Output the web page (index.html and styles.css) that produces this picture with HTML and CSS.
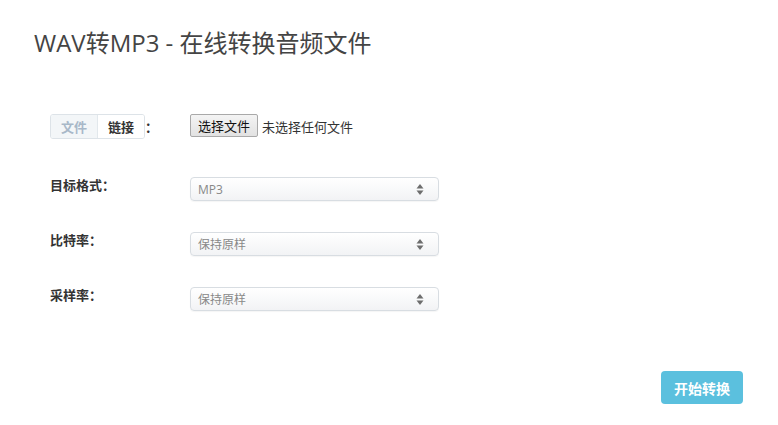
FILE: index.html
```html
<!DOCTYPE html>
<html lang="zh-CN">
<head>
<meta charset="utf-8">
<title>WAV转MP3</title>
<link rel="stylesheet" href="styles.css">
</head>
<body>
<div class="page">
  <h1 class="title">WAV转MP3 - 在线转换音频文件</h1>
  <div class="form">
    <div class="row row-first">
      <div class="label">
        <div class="toggle">
          <span class="seg seg-off">文件</span>
          <span class="seg seg-on">链接</span>
        </div>
        <span class="colon">：</span>
      </div>
      <div class="field file-field">
        <span class="file-btn">选择文件</span>
        <span class="file-text">未选择任何文件</span>
      </div>
    </div>
    <div class="row">
      <div class="label"><span class="lbl">目标格式：</span></div>
      <div class="field">
        <div class="select"><span>MP3</span><svg class="arrows" width="8" height="13" viewBox="0 0 8 13"><path d="M4 1 L7.5 5.5 L0.5 5.5 Z" fill="#6d6d6d"/><path d="M4 12 L7.5 7.5 L0.5 7.5 Z" fill="#6d6d6d"/></svg></div>
      </div>
    </div>
    <div class="row">
      <div class="label"><span class="lbl">比特率：</span></div>
      <div class="field">
        <div class="select"><span>保持原样</span><svg class="arrows" width="8" height="13" viewBox="0 0 8 13"><path d="M4 1 L7.5 5.5 L0.5 5.5 Z" fill="#6d6d6d"/><path d="M4 12 L7.5 7.5 L0.5 7.5 Z" fill="#6d6d6d"/></svg></div>
      </div>
    </div>
    <div class="row">
      <div class="label"><span class="lbl">采样率：</span></div>
      <div class="field">
        <div class="select"><span>保持原样</span><svg class="arrows" width="8" height="13" viewBox="0 0 8 13"><path d="M4 1 L7.5 5.5 L0.5 5.5 Z" fill="#6d6d6d"/><path d="M4 12 L7.5 7.5 L0.5 7.5 Z" fill="#6d6d6d"/></svg></div>
      </div>
    </div>
  </div>
  <div class="actions">
    <span class="start">开始转换</span>
  </div>
</div>
</body>
</html>
```

FILE: styles.css
```css
html, body {
  margin: 0;
  padding: 0;
  background: #fff;
}
body {
  font-family: "Open Sans", "Noto Sans CJK SC", sans-serif;
  color: #333;
  font-size: 13px;
}
.page {
  padding: 26px 35px 0 34px;
}
.title {
  margin: 0;
  font-size: 24px;
  font-weight: 400;
  color: #444;
  line-height: 34px;
  letter-spacing: 0;
}
.form {
  padding-left: 16px;
  margin-top: 54px;
}
.row {
  display: flex;
  align-items: flex-start;
  height: 55px;
}
.row-first {
  height: 61px;
}
.label {
  width: 140px;
  display: flex;
  align-items: center;
  height: 24px;
}
.lbl {
  font-weight: 700;
  font-size: 13px;
  color: #333;
  line-height: 18px;
  margin-top: -5px;
}
.toggle {
  display: flex;
  border: 1px solid #dde3e8;
  border-radius: 3px;
  height: 25px;
  box-sizing: border-box;
  overflow: hidden;
}
.seg {
  display: flex;
  align-items: center;
  justify-content: center;
  height: 100%;
  font-size: 13px;
  font-weight: 700;
}
.seg-off {
  width: 46px;
  background: #f3f6f8;
  color: #a8b8c8;
  border-right: 1px solid #e2e8ec;
}
.seg-on {
  width: 46px;
  background: #fff;
  color: #333;
}
.colon {
  font-weight: 700;
  margin-left: 0;
  color: #333;
}
.field {
  display: flex;
  align-items: center;
}
.file-field {
  height: 24px;
}
.file-btn {
  display: inline-flex;
  align-items: center;
  justify-content: center;
  width: 68px;
  height: 23px;
  box-sizing: border-box;
  border: 1px solid #a9a9a9;
  border-radius: 2px;
  background: linear-gradient(#f4f4f4, #e2e2e2);
  color: #111;
  font-size: 13px;
  margin-top: -1px;
}
.file-text {
  margin-left: 4px;
  color: #333;
  font-size: 13px;
}
.select {
  width: 249px;
  height: 24px;
  box-sizing: border-box;
  border: 1px solid #d8dde2;
  border-radius: 4px;
  background: linear-gradient(#ffffff, #f2f3f5);
  display: flex;
  align-items: center;
  justify-content: space-between;
  padding: 0 14px 0 7px;
  color: #888;
  font-size: 12px;
  margin-top: 2px;
  box-shadow: 0 1px 1px rgba(0,0,0,0.04);
}
.arrows {
  display: block;
}
.actions {
  display: flex;
  justify-content: flex-end;
  margin-top: 31px;
}
.start {
  display: inline-flex;
  align-items: center;
  justify-content: center;
  width: 82px;
  height: 33px;
  border-radius: 4px;
  background: #5bc0de;
  color: #fff;
  font-weight: 700;
  font-size: 14px;
}
```
